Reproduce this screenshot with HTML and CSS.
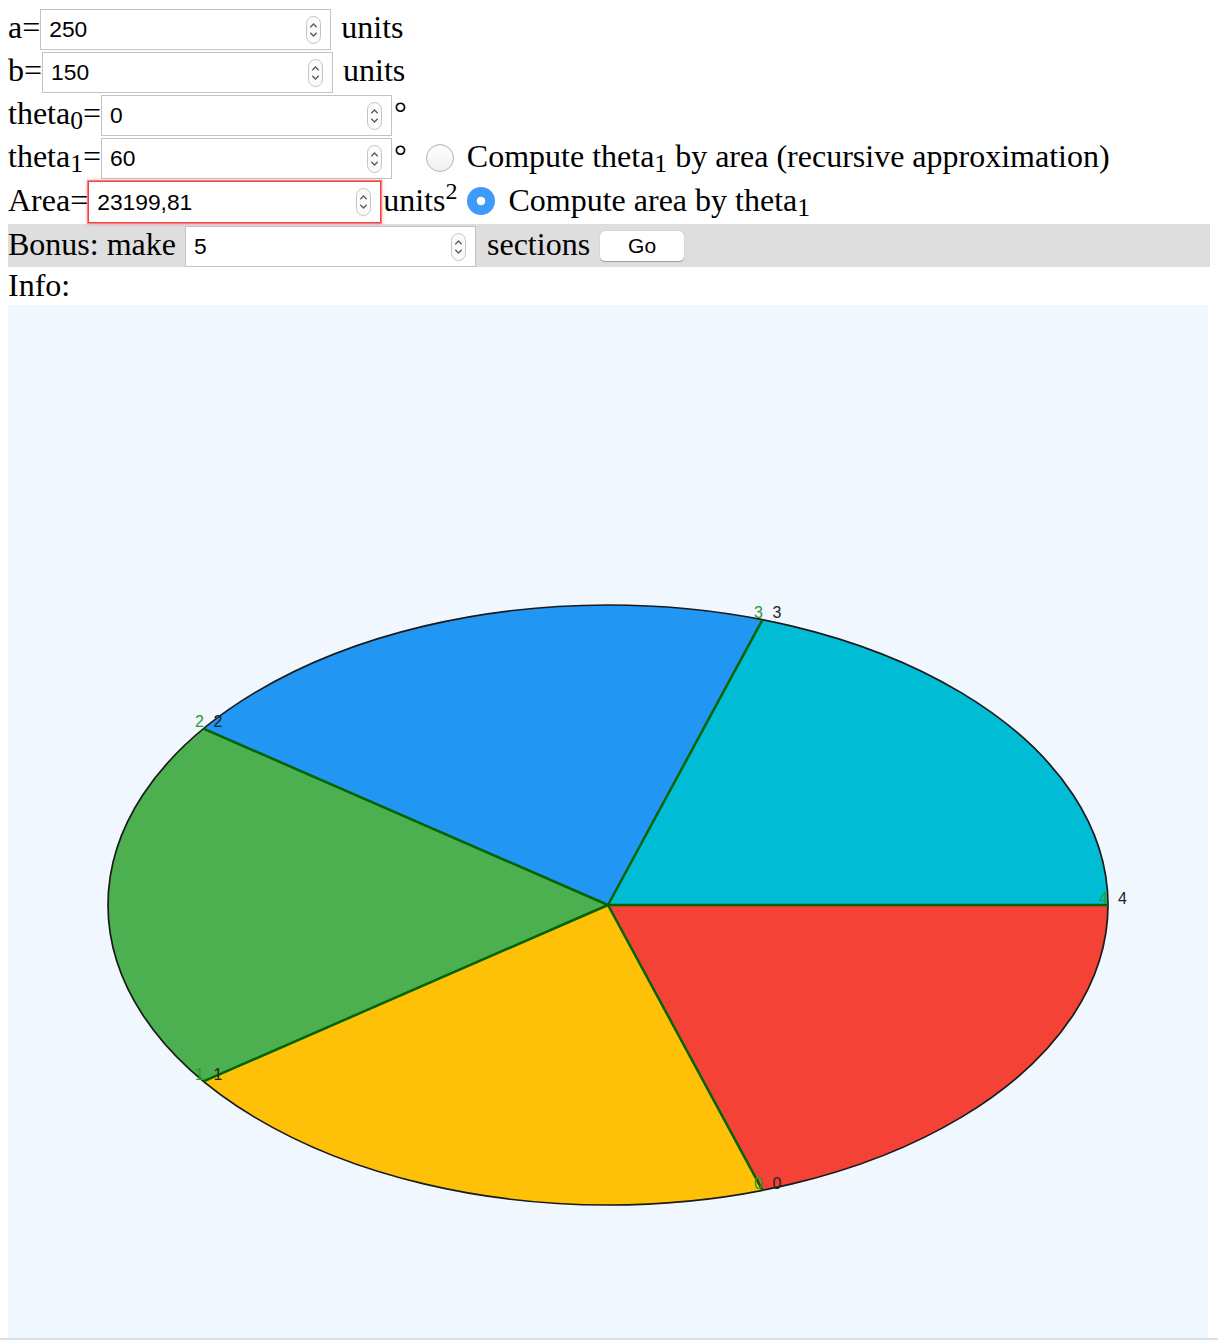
FILE: index.html
```html
<!DOCTYPE html>
<html>
<head>
<meta charset="utf-8">
<link rel="stylesheet" href="styles.css">
</head>
<body>
<div class="row">
  <span class="lbl">a=</span>
  <span class="num"><input class="field" value="250"><svg class="spin" viewBox="0 0 15 28" width="15" height="28"><rect x="0.5" y="0.5" width="14" height="27" rx="7" fill="#fbfbfb" stroke="#c4c4c4"/><path d="M4.3 11.2 L7.5 8 L10.7 11.2 M4.3 16.8 L7.5 20 L10.7 16.8" fill="none" stroke="#5a5a5a" stroke-width="1.3"/></svg></span>
  <span class="unit gap">units</span>
</div>
<div class="row">
  <span class="lbl">b=</span>
  <span class="num"><input class="field" value="150"><svg class="spin" viewBox="0 0 15 28" width="15" height="28"><rect x="0.5" y="0.5" width="14" height="27" rx="7" fill="#fbfbfb" stroke="#c4c4c4"/><path d="M4.3 11.2 L7.5 8 L10.7 11.2 M4.3 16.8 L7.5 20 L10.7 16.8" fill="none" stroke="#5a5a5a" stroke-width="1.3"/></svg></span>
  <span class="unit gap">units</span>
</div>
<div class="row">
  <span class="lbl">theta<sub>0</sub>=</span>
  <span class="num"><input class="field" value="0"><svg class="spin" viewBox="0 0 15 28" width="15" height="28"><rect x="0.5" y="0.5" width="14" height="27" rx="7" fill="#fbfbfb" stroke="#c4c4c4"/><path d="M4.3 11.2 L7.5 8 L10.7 11.2 M4.3 16.8 L7.5 20 L10.7 16.8" fill="none" stroke="#5a5a5a" stroke-width="1.3"/></svg></span>
  <span class="unit">°</span>
</div>
<div class="row">
  <span class="lbl">theta<sub>1</sub>=</span>
  <span class="num"><input class="field" value="60"><svg class="spin" viewBox="0 0 15 28" width="15" height="28"><rect x="0.5" y="0.5" width="14" height="27" rx="7" fill="#fbfbfb" stroke="#c4c4c4"/><path d="M4.3 11.2 L7.5 8 L10.7 11.2 M4.3 16.8 L7.5 20 L10.7 16.8" fill="none" stroke="#5a5a5a" stroke-width="1.3"/></svg></span>
  <span class="unit">°</span>
  <span class="radio radio-off radio-a"></span>
  <span class="opt">Compute theta<sub>1</sub> by area (recursive approximation)</span>
</div>
<div class="row row-area">
  <span class="lbl">Area=</span>
  <span class="num num-invalid"><input class="field" value="23199,81"><svg class="spin" viewBox="0 0 15 28" width="15" height="28"><rect x="0.5" y="0.5" width="14" height="27" rx="7" fill="#fbfbfb" stroke="#c4c4c4"/><path d="M4.3 11.2 L7.5 8 L10.7 11.2 M4.3 16.8 L7.5 20 L10.7 16.8" fill="none" stroke="#5a5a5a" stroke-width="1.3"/></svg></span>
  <span class="unit">units<sup>2</sup></span>
  <span class="radio radio-on radio-b"></span>
  <span class="opt">Compute area by theta<sub>1</sub></span>
</div>
<div class="row bonus">
  <span class="lbl">Bonus: make</span>
  <span class="num num-bonus"><input class="field" value="5"><svg class="spin" viewBox="0 0 15 28" width="15" height="28"><rect x="0.5" y="0.5" width="14" height="27" rx="7" fill="#fbfbfb" stroke="#c4c4c4"/><path d="M4.3 11.2 L7.5 8 L10.7 11.2 M4.3 16.8 L7.5 20 L10.7 16.8" fill="none" stroke="#5a5a5a" stroke-width="1.3"/></svg></span>
  <span class="unit sections">sections</span>
  <button class="go">Go</button>
</div>
<div class="info">Info:</div>
<svg class="chart" width="1200" height="1200" viewBox="0 0 1200 1200">
  <path d="M600 600 L1100 600 A500 300 0 0 0 754.51 314.68 Z" fill="#00BCD4"/>
  <path d="M600 600 L754.51 314.68 A500 300 0 0 0 195.49 423.66 Z" fill="#2196F3"/>
  <path d="M600 600 L195.49 423.66 A500 300 0 0 0 195.49 776.34 Z" fill="#4CAF50"/>
  <path d="M600 600 L195.49 776.34 A500 300 0 0 0 754.51 885.32 Z" fill="#FFC107"/>
  <path d="M600 600 L754.51 885.32 A500 300 0 0 0 1100 600 Z" fill="#F44336"/>
  <ellipse cx="600" cy="600" rx="500" ry="300" fill="none" stroke="#1a1a1a" stroke-width="1.7"/>
  <g stroke="#006400" stroke-width="2.5">
    <line x1="600" y1="600" x2="1100" y2="600"/>
    <line x1="600" y1="600" x2="754.51" y2="314.68"/>
    <line x1="600" y1="600" x2="195.49" y2="423.66"/>
    <line x1="600" y1="600" x2="195.49" y2="776.34"/>
    <line x1="600" y1="600" x2="754.51" y2="885.32"/>
  </g>
  <g class="lab-g" text-anchor="end">
    <text x="1100" y="599">4</text>
    <text x="755" y="313">3</text>
    <text x="196" y="422">2</text>
    <text x="196" y="775">1</text>
    <text x="755" y="884">0</text>
  </g>
  <g class="lab-k">
    <text x="1110" y="599">4</text>
    <text x="764.5" y="313">3</text>
    <text x="205.5" y="422">2</text>
    <text x="205.5" y="775">1</text>
    <text x="764.5" y="884">0</text>
  </g>
</svg>
<div class="edge"></div>
</body>
</html>
```
FILE: styles.css
```css
html {
  overflow: hidden;
  background: #fff;
}
body {
  margin: 8px;
  font-family: "Liberation Serif", "Times New Roman", serif;
  font-size: 32px;
  color: #000;
}
.row {
  display: flex;
  align-items: baseline;
  height: 43px;
  white-space: nowrap;
}
.row-area {
  height: 44px;
}
.lbl {
  line-height: 1;
  position: relative;
  top: 1px;
}
.opt,
.unit {
  position: relative;
  top: 1px;
}
sub {
  font-size: 0.8em;
  vertical-align: -0.2em;
  line-height: 0;
}
sup {
  font-size: 0.75em;
  vertical-align: 0.5em;
  line-height: 0;
}
.num {
  display: inline-flex;
  align-items: center;
  box-sizing: border-box;
  width: 291px;
  height: 41px;
  margin-top: 1px;
  border: 1px solid #c3c3c3;
  background: #fff;
}
.num-invalid {
  width: 293px;
  height: 42px;
  border: 1px solid #e8484a;
  box-shadow: 0 0 0 1px rgba(255, 60, 60, 0.55), 0 0 3px 1px rgba(255, 80, 80, 0.5);
}
.num-bonus {
  margin-left: 9px;
  margin-top: 2px;
}
.field {
  flex: 1;
  min-width: 0;
  border: 0;
  outline: none;
  background: transparent;
  padding: 0 0 0 8px;
  font-family: "Liberation Sans", Arial, sans-serif;
  font-size: 22.8px;
  color: #000;
}
.spin {
  flex: none;
  margin-right: 9px;
  align-self: center;
}
.unit {
  margin-left: 2px;
}
.gap {
  margin-left: 10px;
}
.sections {
  margin-left: 11px;
}
.radio {
  flex: none;
  box-sizing: border-box;
  width: 28px;
  height: 28px;
  border-radius: 50%;
  align-self: center;
  position: relative;
  top: -1px;
}
.radio-off {
  border: 1px solid #b3b3b3;
  background: linear-gradient(#ffffff, #f0f0f0);
  box-shadow: inset 0 1px 1px rgba(0, 0, 0, 0.05);
}
.radio-on {
  background: radial-gradient(circle, #ffffff 0, #ffffff 4px, #3f9bfa 4.6px);
}
.radio-a {
  margin-left: 19px;
  margin-right: 13px;
}
.radio-b {
  margin-left: 10px;
  margin-right: 13px;
}
.bonus {
  background: #dedede;
  width: 1210px;
  height: 43px;
}
.go {
  align-self: center;
  margin-left: 10px;
  width: 84px;
  height: 30px;
  border: 0;
  border-radius: 5px;
  background: #fff;
  box-shadow: 0 0.5px 1px rgba(0, 0, 0, 0.3);
  font-family: "Liberation Sans", Arial, sans-serif;
  font-size: 21px;
  color: #000;
  padding: 0;
}
.info {
  height: 38px;
  line-height: 36px;
}
.chart {
  display: block;
  background: #f0f7ff;
}
.chart text {
  font-family: "Liberation Sans", Arial, sans-serif;
  font-size: 16px;
}
.lab-g text {
  fill: #2a9d2a;
}
.lab-k text {
  fill: #222;
}
.edge {
  position: fixed;
  left: 0;
  bottom: 0;
  width: 1218px;
  height: 2px;
  background: #d9e0e7;
}
```
